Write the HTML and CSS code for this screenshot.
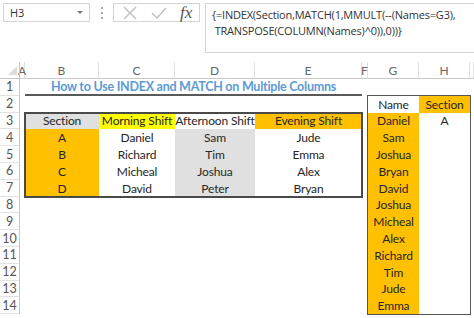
FILE: index.html
```html
<!DOCTYPE html>
<html lang="en">
<head>
    <meta charset="UTF-8">
    <meta name="viewport" content="width=device-width, initial-scale=1.0">
    <title>How to Use INDEX and MATCH on Multiple Columns</title>
    <link rel="stylesheet" href="styles.css">
</head>
<body>

    <div class="formula-bar">
        <div class="name-box">
            <span>H3</span>
            <span class="caret"></span>
        </div>
        <div class="grip"><i></i><i></i><i></i></div>
        <div class="tools">
            <svg class="icon" width="16" height="14" viewBox="0 0 16 14"><path d="M2 1 L14 13 M14 1 L2 13"/></svg>
            <svg class="icon" width="16" height="12" viewBox="0 0 16 12"><path d="M1 6 L6 11 L15 1"/></svg>
            <span class="fx">fx</span>
        </div>
        <div class="formula">{=INDEX(Section,MATCH(1,MMULT(--(Names=G3),<br>&nbsp;TRANSPOSE(COLUMN(Names)^0)),0))}</div>
    </div>

    <div class="sheet">
        <div class="col-head corner"><span></span></div>
        <div class="col-head">A</div>
        <div class="col-head">B</div>
        <div class="col-head">C</div>
        <div class="col-head">D</div>
        <div class="col-head">E</div>
        <div class="col-head">F</div>
        <div class="col-head">G</div>
        <div class="col-head">H</div>
        <div class="col-head"></div>

        <div class="row-nums">
            <div>1</div><div>2</div><div>3</div><div>4</div><div>5</div><div>6</div><div>7</div>
            <div>8</div><div>9</div><div>10</div><div>11</div><div>12</div><div>13</div><div>14</div>
        </div>

        <div class="title">How to Use INDEX and MATCH on Multiple Columns</div>

        <div class="shifts">
            <div class="cell gray">Section</div>
            <div class="cell yellow">Morning Shift</div>
            <div class="cell">Afternoon Shift</div>
            <div class="cell orange">Evening Shift</div>

            <div class="cell orange">A</div>
            <div class="cell">Daniel</div>
            <div class="cell gray">Sam</div>
            <div class="cell">Jude</div>

            <div class="cell orange">B</div>
            <div class="cell">Richard</div>
            <div class="cell gray">Tim</div>
            <div class="cell">Emma</div>

            <div class="cell orange">C</div>
            <div class="cell">Micheal</div>
            <div class="cell gray">Joshua</div>
            <div class="cell">Alex</div>

            <div class="cell orange">D</div>
            <div class="cell">David</div>
            <div class="cell gray">Peter</div>
            <div class="cell">Bryan</div>
        </div>

        <div class="lookup">
            <div class="cell">Name</div><div class="cell orange">Section</div>
            <div class="cell orange">Daniel</div><div class="cell">A</div>
            <div class="cell orange">Sam</div><div class="cell"></div>
            <div class="cell orange">Joshua</div><div class="cell"></div>
            <div class="cell orange">Bryan</div><div class="cell"></div>
            <div class="cell orange">David</div><div class="cell"></div>
            <div class="cell orange">Joshua</div><div class="cell"></div>
            <div class="cell orange">Micheal</div><div class="cell"></div>
            <div class="cell orange">Alex</div><div class="cell"></div>
            <div class="cell orange">Richard</div><div class="cell"></div>
            <div class="cell orange">Tim</div><div class="cell"></div>
            <div class="cell orange">Jude</div><div class="cell"></div>
            <div class="cell orange">Emma</div><div class="cell"></div>
        </div>
    </div>

</body>
</html>
```

FILE: styles.css
```css
* {
    margin: 0;
    padding: 0;
    box-sizing: border-box;
}

body {
    width: 474px;
    height: 318px;
    overflow: hidden;
    background: white;
    font-family: 'Lato', 'Open Sans', sans-serif;
    color: #222;
}

/* formula bar */

.formula-bar {
    display: flex;
    align-items: flex-start;
    height: 62px;
    padding: 3px 0 0 3px;
    font-family: 'Open Sans', sans-serif;
}

.name-box {
    display: flex;
    align-items: center;
    justify-content: space-between;
    width: 87px;
    height: 19px;
    padding: 0 6px 0 6px;
    border: 1px solid #d4d4d4;
    font-size: 11px;
    color: #333;
}

.caret {
    width: 0;
    height: 0;
    border-left: 3px solid transparent;
    border-right: 3px solid transparent;
    border-top: 3px solid #777;
}

.grip {
    display: flex;
    flex-direction: column;
    gap: 3px;
    width: 23px;
    height: 19px;
    padding-top: 4px;
    align-items: center;
}

.grip i {
    width: 2px;
    height: 2px;
    background: #aaa;
}

.tools {
    display: flex;
    align-items: center;
    gap: 13px;
    width: 87px;
    height: 19px;
    padding-left: 8px;
    border: 1px solid #d4d4d4;
}

.icon path {
    fill: none;
    stroke: #c4c4c4;
    stroke-width: 1.6;
}

.fx {
    font-family: 'Liberation Serif', serif;
    font-style: italic;
    font-size: 17px;
    color: #555;
    line-height: 17px;
}

.formula {
    flex: 1;
    height: 50px;
    margin-left: 5px;
    padding: 3px 0 0 6px;
    border: 1px solid #d4d4d4;
    border-right: none;
    font-size: 11px;
    letter-spacing: -0.2px;
    line-height: 16px;
    color: #333;
    white-space: nowrap;
}

/* sheet */

.sheet {
    display: grid;
    grid-template-columns: 20px 5px 74px 76px 80px 107px 6px 51px 51px 1fr;
    grid-template-rows: 17px repeat(14, 16.8px);
}

.col-head {
    display: flex;
    align-items: center;
    justify-content: center;
    border-right: 1px solid #e2e2e2;
    border-bottom: 1px solid #c6c6c6;
    font-size: 12px;
    color: #666;
    overflow: visible;
}

.corner {
    position: relative;
    border-right: 1px solid #c6c6c6;
}

.corner span {
    position: absolute;
    right: 2px;
    bottom: 3px;
    width: 0;
    height: 0;
    border-left: 9px solid transparent;
    border-bottom: 9px solid #dcdcdc;
}

.row-nums {
    grid-column: 1;
    grid-row: 2 / 16;
    display: flex;
    flex-direction: column;
    border-right: 1px solid #c6c6c6;
}

.row-nums div {
    height: 16.8px;
    display: flex;
    align-items: center;
    justify-content: center;
    border-bottom: 1px solid #e2e2e2;
    font-size: 12.5px;
    color: #555;
}

.title {
    grid-column: 3 / 7;
    grid-row: 2;
    border-bottom: 2px solid #595959;
    text-align: center;
    font-weight: bold;
    font-size: 12.5px;
    letter-spacing: -0.25px;
    line-height: 16px;
    color: #5b9bd5;
    white-space: nowrap;
}

.cell {
    display: flex;
    align-items: center;
    justify-content: center;
    font-size: 12px;
    letter-spacing: -0.15px;
    white-space: nowrap;
    color: #262626;
}

.gray {
    background: #e0e0e0;
}

.yellow {
    background: #ffff00;
}

.orange {
    background: #ffc000;
}

.shifts {
    grid-column: 3 / 7;
    grid-row: 4 / 9;
    display: grid;
    grid-template-columns: 74px 76px 80px 107px;
    grid-auto-rows: 16.8px;
    outline: 2px solid #4a4a4a;
    outline-offset: -1px;
}

.lookup {
    grid-column: 8 / 10;
    grid-row: 3 / 16;
    display: grid;
    grid-template-columns: 51px 51px;
    grid-auto-rows: 16.8px;
    outline: 1px solid #555;
}
```
